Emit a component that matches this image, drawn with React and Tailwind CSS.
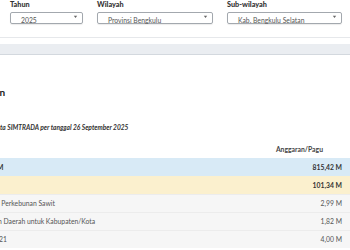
import React from "react";

// Filter bar + summary table, shown scrolled to the right (left column cut off)

const filters = [
  { label: "Tahun", value: "2025", width: "w-[73px]" },
  { label: "Wilayah", value: "Provinsi Bengkulu", width: "w-[116px]" },
  { label: "Sub-wilayah", value: "Kab. Bengkulu Selatan", width: "w-[115px]" },
];

const rows = [
  { label: "M", value: "815,42 M", bg: "bg-[#d8eaf6]", bold: true, shift: "-ml-[3px]" },
  { label: "", value: "101,34 M", bg: "bg-[#fbf0ce]", bold: true, shift: "" },
  { label: "l Perkebunan Sawit", value: "2,99 M", bg: "bg-[#f6f6f6]", bold: false, shift: "-ml-[2px]" },
  { label: "n Daerah untuk Kabupaten/Kota", value: "1,82 M", bg: "bg-[#f6f6f6]", bold: false, shift: "-ml-[2px]" },
  { label: "21", value: "4,00 M", bg: "bg-[#f6f6f6]", bold: false, shift: "-ml-[1px]" },
];

function Caret() {
  return (
    <svg width="5" height="4" viewBox="0 0 5 4" className="text-[#666]">
      <path d="M0.8 0.8h3.4L2.5 3z" fill="currentColor" />
    </svg>
  );
}

export default function App() {
  return (
    <div className="w-[350px] h-[250px] overflow-hidden bg-white font-['Lato',sans-serif] text-[#333]">
      {/* ── Filters ─────────────────────────────────────────── */}
      <div className="h-[41px] border-b border-[#e6e8eb] flex gap-[14px] pl-[10px] -mt-[3px]">
        {filters.map((f) => (
          <div key={f.label} className={`${f.width} flex flex-col`}>
            <span className="h-[15px] leading-[15px] text-[7.3px] font-black text-[#333]">
              {f.label}
            </span>
            <div className="h-[12px] border border-[#a3a8ae] rounded-[2px] shadow-[0_1px_1px_rgba(0,0,0,0.08)] flex items-start justify-between pl-[10px] pr-[4px]">
              <span className="text-[6.8px] leading-[7px] mt-[4px] text-[#555]">{f.value}</span>
              <span className="mt-[2px]">
                <Caret />
              </span>
            </div>
          </div>
        ))}
      </div>

      {/* ── Grey tab strip ──────────────────────────────────── */}
      <div className="mt-[6px] h-[11px] bg-[#eaedf1] border-b border-[#d3d8de]" />

      {/* ── Title + note ────────────────────────────────────── */}
      <div className="mt-[31px] h-[12px] leading-[12px] text-[10px] font-bold text-[#222]">
        <span className="-ml-[0.5px]">n</span>
      </div>
      <div className="mt-[24px] h-[10px] leading-[10px] text-[6.6px] italic font-bold text-[#333]">
        ta SIMTRADA per tanggal 26 September 2025
      </div>

      {/* ── Table ───────────────────────────────────────────── */}
      <div className="mt-[8px]">
        <div className="h-[18px] flex items-center justify-end pr-[27px] text-[6.8px] font-bold text-[#444]">
          Anggaran/Pagu
        </div>
        {rows.map((r, i) => (
          <div
            key={i}
            className={`h-[18px] flex items-center justify-between pr-[8px] text-[6.8px] ${r.bg} ${
              i > 1 ? "border-t border-[#ececec]" : ""
            } ${r.bold ? "font-bold text-[#333]" : "text-[#555]"}`}
          >
            <span className={`whitespace-nowrap ${r.shift}`}>{r.label}</span>
            <span>{r.value}</span>
          </div>
        ))}
      </div>
    </div>
  );
}
